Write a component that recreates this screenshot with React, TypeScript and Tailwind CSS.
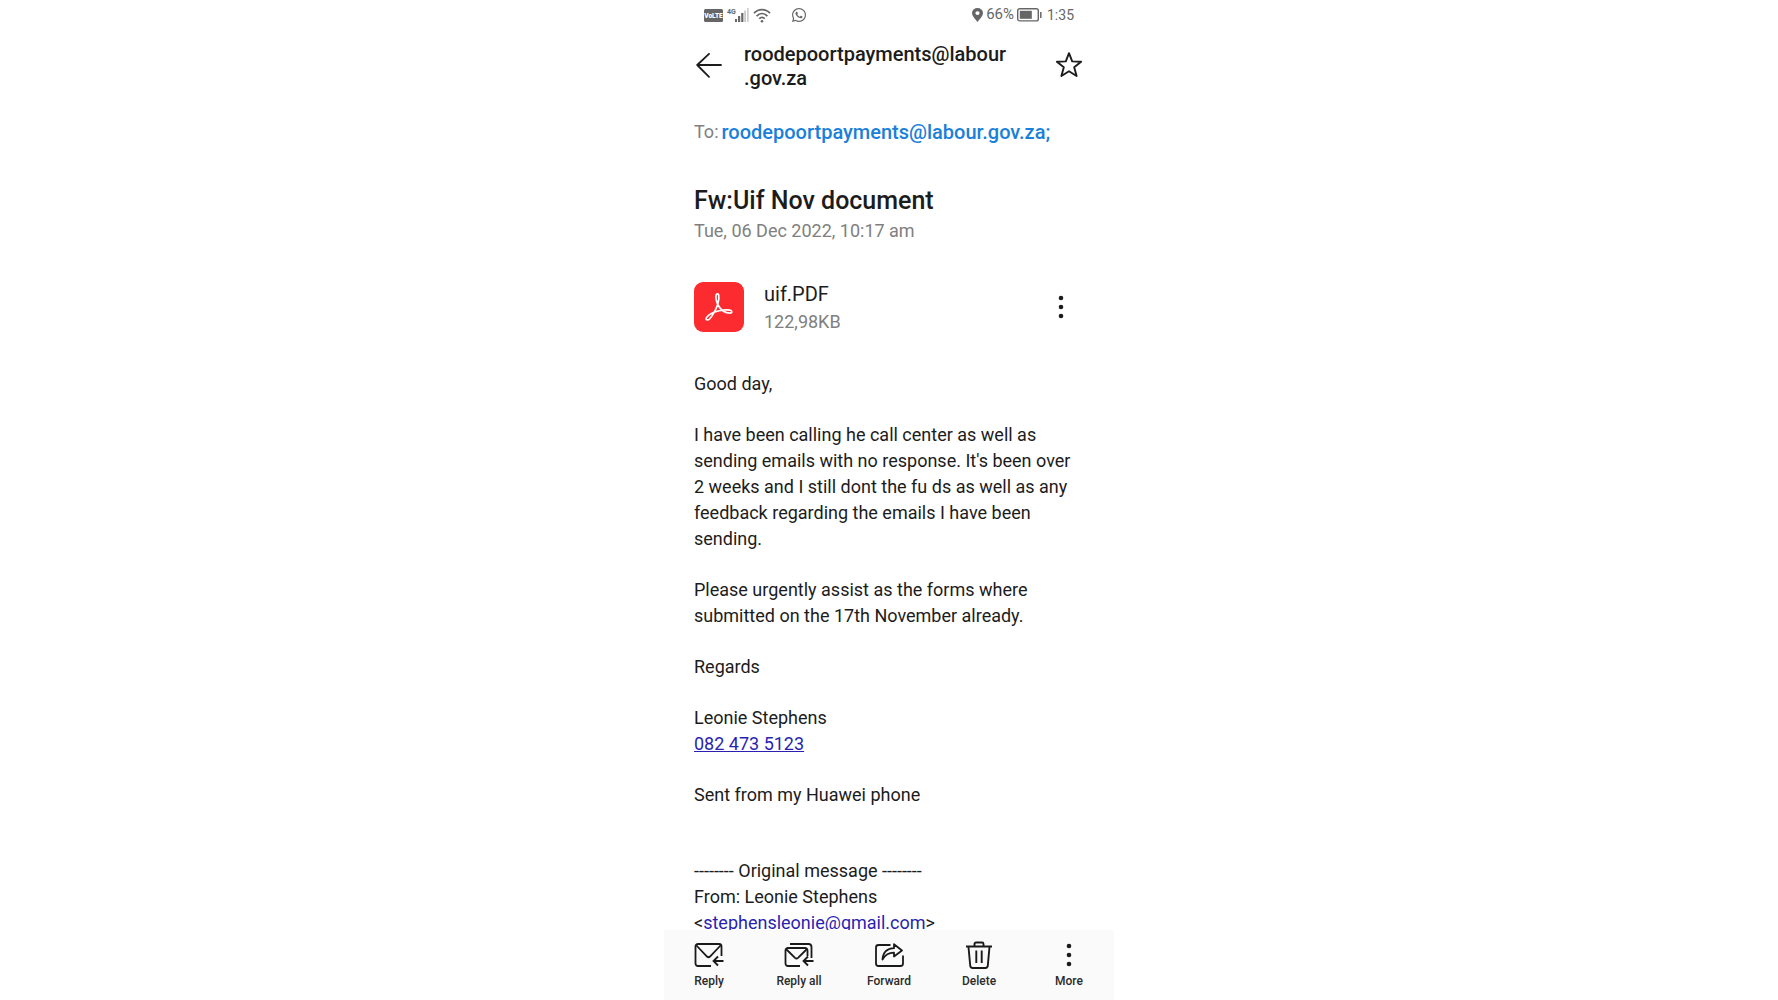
import { ReactNode, useState } from "react";
import { FaWhatsapp } from "react-icons/fa";

const PARAGRAPHS = [
  "Good day,",
  "I have been calling he call center as well as sending emails with no response. It's been over 2 weeks and I still dont the fu ds as well as any feedback regarding the emails I have been sending.",
  "Please urgently assist as the forms where submitted on the 17th November already.",
  "Regards",
];

function VolteIcon() {
  return (
    <svg width="19" height="13" viewBox="0 0 19 13" className="text-[#666]">
      <rect width="19" height="13" rx="1.5" fill="currentColor" />
      <text x="9.5" y="9" textAnchor="middle" fontSize="6.5" fontWeight="900" fill="#fff">
        VoLTE
      </text>
    </svg>
  );
}

function SignalIcon() {
  return (
    <svg width="23" height="16" viewBox="0 0 23 16" fill="currentColor">
      <text x="0" y="6.5" fontSize="7" fontWeight="700">
        4G
      </text>
      <rect x="8" y="12" width="2" height="3" />
      <rect x="11" y="9" width="2.2" height="6" />
      <rect x="14.2" y="6" width="2.2" height="9" />
      <rect x="17.2" y="3.5" width="1.8" height="11.5" opacity="0.35" />
      <rect x="20" y="1" width="1.8" height="14" opacity="0.3" />
    </svg>
  );
}

function WifiIcon() {
  return (
    <svg width="18" height="15" viewBox="0 0 18 15" fill="none" stroke="currentColor" strokeWidth="1.8">
      <path d="M1 5.2C5.6.5 12.4.5 17 5.2" />
      <path d="M3.6 8.1c3.2-3.2 7.6-3.2 10.8 0" />
      <path d="M6.2 10.7c1.7-1.6 3.9-1.6 5.6 0" />
      <circle cx="9" cy="13.2" r="1.3" fill="currentColor" stroke="none" />
    </svg>
  );
}

function PinIcon() {
  return (
    <svg width="11" height="14" viewBox="0 0 10 14" fill="currentColor" preserveAspectRatio="none">
      <path
        fillRule="evenodd"
        d="M5 0a5 5 0 0 1 5 5c0 3-2.6 5.6-5 9C2.6 10.600 0 8 0 5a5 5 0 0 1 5-5Zm0 3.200a1.900 1.900 0 1 0 0 3.800 1.900 1.900 0 0 0 0-3.800Z"
      />
    </svg>
  );
}

function BatteryIcon() {
  return (
    <svg width="25" height="14" viewBox="0 0 25 14" fill="none">
      <rect x="0.7" y="0.7" width="20.6" height="12.2" rx="2" stroke="currentColor" strokeWidth="1.4" />
      <rect x="2.8" y="2.8" width="12" height="8" fill="currentColor" />
      <path d="M23.8 4v6" stroke="currentColor" strokeWidth="1.5" />
    </svg>
  );
}

function BackIcon() {
  return (
    <svg width="28" height="26" viewBox="0 0 28 26" fill="none" stroke="currentColor" strokeWidth="1.8" strokeLinecap="round">
      <path d="M27 12H3.500M15 .9 3.200 12 15 23.800" strokeLinejoin="round" />
    </svg>
  );
}

function StarIcon({ filled }: { filled: boolean }) {
  return (
    <svg width="28" height="28" viewBox="0 0 28 28" fill={filled ? "currentColor" : "none"}>
      <path
        d="M13 1.200l3.200 8.200 8.900.4-6.900 5.500 2.400 8.700L13 19.200l-7.600 4.800 2.400-8.700L.9 9.800l8.900-.4z"
        stroke="currentColor"
        strokeWidth="1.9"
        strokeLinejoin="round"
      />
    </svg>
  );
}

function AcrobatIcon() {
  return (
    <svg width="50" height="50" viewBox="0 0 50 50" className="shrink-0">
      <rect width="50" height="50" rx="9" fill="#fb2b30" />
      <g fill="none" stroke="#fff" strokeWidth="1.7" strokeLinejoin="round">
        <path d="M23.700 22.500c-1.500-4-2.200-7.500-1.600-9.600.4-1.500 2.300-1.400 2.600.1.500 2.500 0 6.500-1 9.500-2 5.500-5.500 11.500-8.200 14.500-1.700 1.700-4.300.8-3.200-1.100 1.700-2.900 6.700-5.700 11.700-6.900 4.500-1.100 9-1.400 12-.8 2.500.6 2.300 2.900.1 2.900-4.500 0-9.400-3.100-12.400-8.600z" />
      </g>
    </svg>
  );
}

function DotsIcon() {
  return (
    <svg width="6" height="24" viewBox="0 0 6 24" fill="currentColor">
      <circle cx="3" cy="3" r="2.3" />
      <circle cx="3" cy="12" r="2.3" />
      <circle cx="3" cy="21" r="2.3" />
    </svg>
  );
}

function ReplyIcon() {
  return (
    <svg width="30" height="28" viewBox="0 0 30 28" fill="none" stroke="currentColor" strokeWidth="1.8">
      <path d="M17 25H4a2.500 2.500 0 0 1-2.500-2.500v-17A2.500 2.500 0 0 1 4 3h21a2.500 2.500 0 0 1 2.500 2.500V15" />
      <path d="M2 4l11 11.500c1 1 2 1 3 0L27 4" />
      <path d="M29.500 20h-9.500M24 15.500 19.500 20l4.500 4.500" />
    </svg>
  );
}

function ReplyAllIcon() {
  return (
    <svg width="30" height="28" viewBox="0 0 30 28" fill="none" stroke="currentColor" strokeWidth="1.8">
      <path d="M16 25H4a2.500 2.500 0 0 1-2.500-2.500V9.500A2.500 2.500 0 0 1 4 7h17a2.500 2.500 0 0 1 2.500 2.500V15" />
      <path d="M2 8l9 8.800c1 .9 2 .9 3 0L23 8" />
      <path d="M6 3h18.500A3 3 0 0 1 27.500 6v11" />
      <path d="M29.500 20H20M24 15.500 19.500 20l4.500 4.500" />
    </svg>
  );
}

function ForwardIcon() {
  return (
    <svg width="30" height="28" viewBox="0 0 30 28" fill="none" stroke="currentColor" strokeWidth="1.8" strokeLinejoin="round">
      <path d="M16.500 4H4.500A2.500 2.500 0 0 0 2 6.500v16A2.500 2.500 0 0 0 4.500 25h22a2.500 2.500 0 0 0 2.500-2.500V14.500" />
      <path d="M8.500 18.500C9 11.500 13 7.500 20 7.200V3.200l8 6.300-8 6v-3.800c-5-.1-8.500 1.800-11.500 6.800z" />
    </svg>
  );
}

function DeleteIcon() {
  return (
    <svg width="30" height="28" viewBox="0 0 30 28" fill="none" stroke="currentColor" strokeWidth="1.9" strokeLinejoin="round">
      <path d="M2 5.500h26M10.500 5V3A1.500 1.500 0 0 1 12 1.500h6A1.500 1.500 0 0 1 19.500 3v2" />
      <path d="M4.500 6l1.700 18.500A2.400 2.400 0 0 0 8.600 27h12.800a2.400 2.400 0 0 0 2.400-2.500L25.500 6" />
      <path d="M12.300 9.500V22M17.700 9.500V22" />
    </svg>
  );
}

interface ToolButtonProps {
  label: string;
  children: ReactNode;
}

function ToolButton({ label, children }: ToolButtonProps) {
  return (
    <button className="flex flex-col items-center gap-1 pt-[11px] text-xs font-medium text-[#2b2b2b]">
      <span className="flex h-7 items-center text-[#1a1a1a]">{children}</span>
      {label}
    </button>
  );
}

export default function App() {
  const [starred, setStarred] = useState(false);

  return (
    <div className="h-screen bg-white font-['Roboto',sans-serif] text-[#1c1c1c]">
      <div className="mx-auto flex h-full max-w-[450px] flex-col">
        <div className="flex h-[30px] shrink-0 items-center px-10 text-sm text-[#666]">
          <VolteIcon />
          <span className="ml-1">
            <SignalIcon />
          </span>
          <span className="ml-[3px]">
            <WifiIcon />
          </span>
          <FaWhatsapp className="ml-5 size-4" />
          <span className="ml-auto flex items-center gap-[3px]">
            <PinIcon />
            <span className="text-[15px]">66%</span>
            <BatteryIcon />
            <span className="ml-0.5">1:35</span>
          </span>
        </div>

        <header className="flex shrink-0 items-center px-[30px] pt-3">
          <button aria-label="Back" className="w-[50px] shrink-0">
            <BackIcon />
          </button>
          <h1 className="w-[290px] text-xl leading-6 font-medium">
            roodepoortpayments@labour
            <wbr />
            .gov.za
          </h1>
          <button aria-label="Star" onClick={() => setStarred(!starred)} className="ml-auto">
            <StarIcon filled={starred} />
          </button>
        </header>

        <main className="min-h-0 flex-1 overflow-hidden px-[30px]">
          <div className="mt-7 flex items-center gap-[3px] leading-7">
            <span className="text-lg leading-7 text-[#808080]">To:</span>
            <a href="mailto:roodepoortpayments@labour.gov.za" className="text-xl font-medium text-[#1a80d9]">
              roodepoortpayments@labour.gov.za;
            </a>
          </div>

          <h2 className="mt-[38px] text-[25px] leading-[34px] font-medium">Fw:Uif Nov document</h2>
          <p className="text-lg leading-[26px] text-[#808080]">Tue, 06 Dec 2022, 10:17 am</p>

          <div className="mt-[34px] flex items-center gap-5">
            <AcrobatIcon />
            <div className="pt-0.5">
              <p className="text-xl leading-7">uif.PDF</p>
              <p className="text-lg leading-7 text-[#808080]">122,98KB</p>
            </div>
            <button aria-label="Attachment options" className="mr-5 ml-auto">
              <DotsIcon />
            </button>
          </div>

          <div className="mt-[35px] space-y-[25px] text-lg leading-[26px]">
            {PARAGRAPHS.map((text) => (
              <p key={text}>{text}</p>
            ))}
            <p>
              Leonie Stephens
              <br />
              <a href="tel:0824735123" className="text-[#2a1fb0] underline">
                082 473 5123
              </a>
            </p>
            <p>Sent from my Huawei phone</p>
            <p className="pt-[25px]">
              -------- Original message --------
              <br />
              From: Leonie Stephens
              <br />
              &lt;
              <a href="mailto:stephensleonie@gmail.com" className="text-[#2a1fb0] underline">
                stephensleonie@gmail.com
              </a>
              &gt;
            </p>
          </div>
        </main>

        <nav className="grid h-[70px] shrink-0 grid-cols-5 items-start bg-[#fafafa]">
          <ToolButton label="Reply">
            <ReplyIcon />
          </ToolButton>
          <ToolButton label="Reply all">
            <ReplyAllIcon />
          </ToolButton>
          <ToolButton label="Forward">
            <ForwardIcon />
          </ToolButton>
          <ToolButton label="Delete">
            <DeleteIcon />
          </ToolButton>
          <ToolButton label="More">
            <DotsIcon />
          </ToolButton>
        </nav>
      </div>
    </div>
  );
}
